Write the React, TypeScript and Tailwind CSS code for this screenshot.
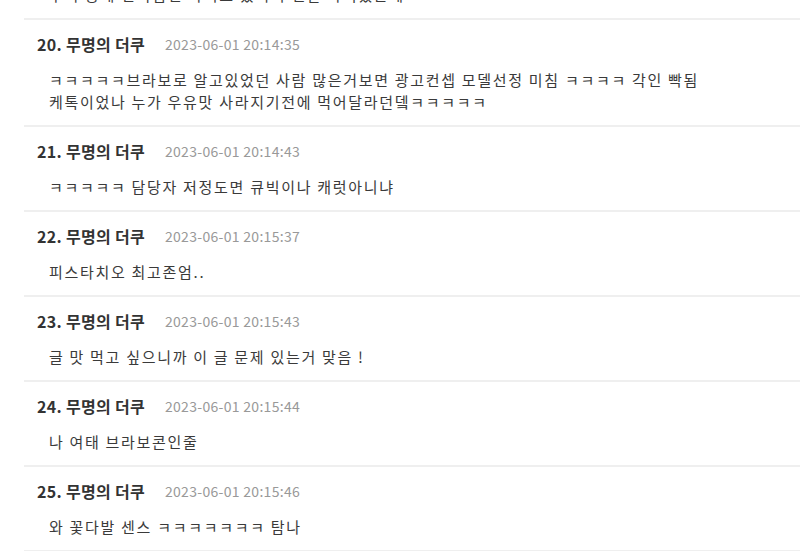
type Comment = {
  no: number;
  author: string;
  date: string;
  lines: string[];
};

const comments: Comment[] = [
  { no: 19, author: '무명의 더쿠', date: '2023-06-01 20:14:20', lines: ['우리 동네 편의점엔 아직도 있어서 맨날 사먹었는데'] },
  {
    no: 20,
    author: '무명의 더쿠',
    date: '2023-06-01 20:14:35',
    lines: [
      'ㅋㅋㅋㅋㅋ브라보로 알고있었던 사람 많은거보면 광고컨셉 모델선정 미침 ㅋㅋㅋㅋ 각인 빡됨',
      '케톡이었나 누가 우유맛 사라지기전에 먹어달라던뎈ㅋㅋㅋㅋㅋ',
    ],
  },
  { no: 21, author: '무명의 더쿠', date: '2023-06-01 20:14:43', lines: ['ㅋㅋㅋㅋㅋ 담당자 저정도면 큐빅이나 캐럿아니냐'] },
  { no: 22, author: '무명의 더쿠', date: '2023-06-01 20:15:37', lines: ['피스타치오 최고존엄..'] },
  { no: 23, author: '무명의 더쿠', date: '2023-06-01 20:15:43', lines: ['글 맛 먹고 싶으니까 이 글 문제 있는거 맞음 !'] },
  { no: 24, author: '무명의 더쿠', date: '2023-06-01 20:15:44', lines: ['나 여태 브라보콘인줄'] },
  { no: 25, author: '무명의 더쿠', date: '2023-06-01 20:15:46', lines: ['와 꽃다발 센스 ㅋㅋㅋㅋㅋㅋㅋ 탐나'] },
];

function CommentItem({ c }: { c: Comment }) {
  return (
    <li className="border-b-2 border-[#efefef] pt-[14px] pb-[12px]">
      <div className="flex items-center h-5 pl-[13px]">
        <span className="text-[16px] font-bold text-[#333] tracking-[0.3px]">
          {c.no}. {c.author}
        </span>
        <span className="ml-5 text-[14px] text-[#999] tracking-[0.3px]">{c.date}</span>
      </div>
      <div className="mt-[15px] pl-[25px] text-[15px] leading-[22px] text-[#3a3a3a] tracking-[1.7px]">
        {c.lines.map((l, i) => (
          <p key={i} className="whitespace-nowrap">
            {l}
          </p>
        ))}
      </div>
    </li>
  );
}

export default function App() {
  return (
    <div className="h-[551px] overflow-hidden bg-white font-['Noto_Sans_CJK_KR','Noto_Sans',sans-serif]">
      <ul className="ml-6 mt-[-65px]">
        {comments.map((c) => (
          <CommentItem key={c.no} c={c} />
        ))}
      </ul>
    </div>
  );
}
